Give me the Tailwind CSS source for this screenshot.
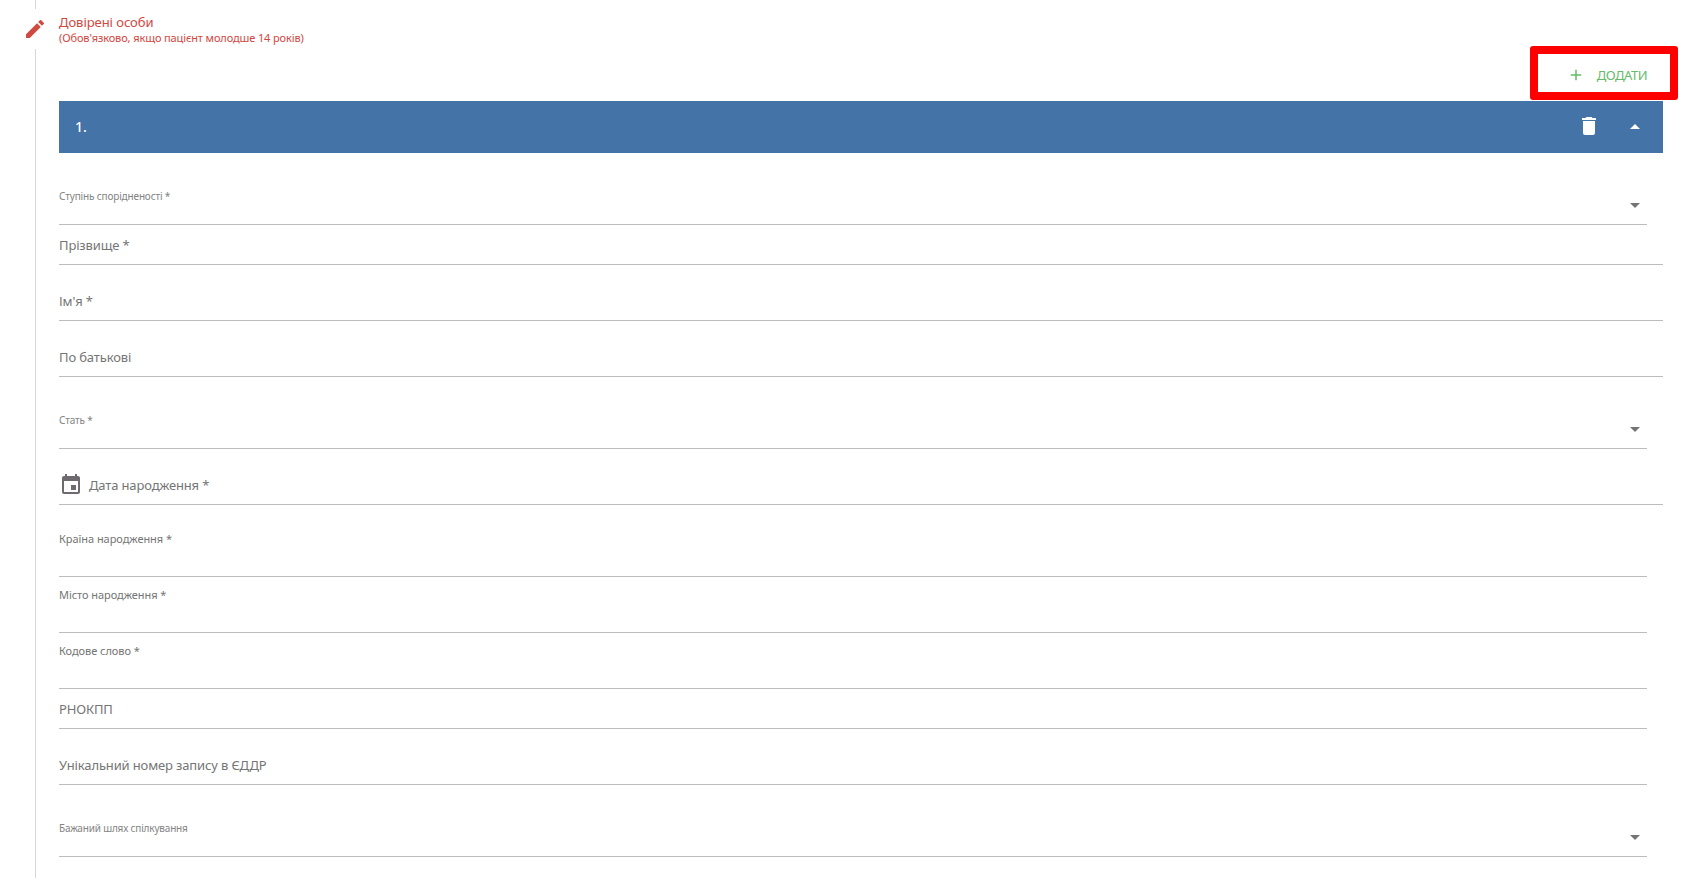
<!DOCTYPE html>
<html lang="uk">
<head>
<meta charset="utf-8">
<title>Довірені особи</title>
<script src="https://cdn.jsdelivr.net/npm/@tailwindcss/browser@4"></script>
</head>
<body class="bg-white font-['Noto_Sans',sans-serif] overflow-hidden">
<div class="flex h-[878px] w-[1683px]">
  <!-- rail -->
  <div class="w-[59px] flex flex-col shrink-0">
    <div class="ml-[35px] w-[1px] h-[9px] bg-[#d6d6d6]"></div>
    <div class="h-[40px] pl-[23px] flex items-center">
      <svg class="w-[24px] h-[24px] text-[#cf4a40]" viewBox="0 0 24 24" fill="currentColor"><path d="M3 17.25V21h3.75L17.81 9.94l-3.75-3.75L3 17.25zM20.71 7.04a1 1 0 0 0 0-1.41l-2.34-2.34a1 1 0 0 0-1.41 0l-1.83 1.83 3.75 3.75 1.83-1.83z"/></svg>
    </div>
    <div class="ml-[35px] w-[1px] flex-1 bg-[#d6d6d6]"></div>
  </div>

  <div class="w-[1604px] flex flex-col">
    <div class="h-[46px] pt-[14px] text-[#d2473f]">
      <div class="text-[13px] leading-[16px] tracking-[-0.05px]">Довірені особи</div>
      <div class="text-[11px] leading-[14px] mt-[1px] tracking-[-0.12px]">(Обов'язково, якщо пацієнт молодше 14 років)</div>
    </div>

    <div class="h-[55px] flex justify-end">
      <div class="relative w-[125px] h-[37px] mt-[8px] flex items-center justify-end pt-[5px] pr-[16px] gap-[12px] text-[#66bb6a]">
        <svg class="w-[18px] h-[18px]" viewBox="0 0 24 24" fill="currentColor"><path d="M19 13h-6v6h-2v-6H5v-2h6V5h2v6h6v2z"/></svg>
        <span class="text-[13px] leading-none uppercase tracking-[-0.5px] mt-[1px]">Додати</span>
        <div class="absolute left-[-8px] right-[-15px] top-[-8px] bottom-[-9px] border-[8px] border-[#ff0000] rounded-[3px]"></div>
      </div>
    </div>

    <div class="h-[52px] bg-[#4373a7] flex items-center pl-[16px] text-white">
      <span class="text-[14px] font-medium flex-1 mb-[1px]">1.</span>
      <svg class="w-[24px] h-[24px] mr-[22px] mb-[2px]" viewBox="0 0 24 24" fill="currentColor"><path d="M6 19c0 1.1.9 2 2 2h8c1.1 0 2-.9 2-2V7H6v12zM19 4h-3.5l-1-1h-5l-1 1H5v2h14V4z"/></svg>
      <svg class="w-[24px] h-[24px] mr-[16px]" viewBox="0 0 24 24" fill="currentColor"><path d="M7 14l5-5 5 5z"/></svg>
    </div>

    <!-- Ступінь спорідненості -->
    <div class="h-[72px] mr-[16px] border-b border-[#bdbdbd] flex justify-between items-end text-[#848484]">
      <span class="text-[10px] leading-[13px] mb-[21px] tracking-[-0.15px]">Ступінь спорідненості *</span>
      <svg class="w-[24px] h-[24px] mb-[7px] text-[#757575]" viewBox="0 0 24 24" fill="currentColor"><path d="M7 10l5 5 5-5z"/></svg>
    </div>
    <div class="h-[40px] border-b border-[#bdbdbd] flex items-end pb-[10px] text-[13px] leading-[18px] tracking-[-0.14px] text-[#757575]">Прізвище *</div>
    <div class="h-[56px] border-b border-[#bdbdbd] flex items-end pb-[10px] text-[13px] leading-[18px] tracking-[-0.14px] text-[#757575]">Ім'я *</div>
    <div class="h-[56px] border-b border-[#bdbdbd] flex items-end pb-[10px] text-[13px] leading-[18px] tracking-[-0.14px] text-[#757575]">По батькові</div>

    <!-- Стать -->
    <div class="h-[72px] mr-[16px] border-b border-[#bdbdbd] flex justify-between items-end text-[#848484]">
      <span class="text-[10px] leading-[13px] mb-[21px] tracking-[-0.15px]">Стать *</span>
      <svg class="w-[24px] h-[24px] mb-[7px] text-[#757575]" viewBox="0 0 24 24" fill="currentColor"><path d="M7 10l5 5 5-5z"/></svg>
    </div>

    <div class="h-[56px] border-b border-[#bdbdbd] flex items-end pb-[10px] text-[13px] leading-[18px] tracking-[-0.14px] text-[#757575]">
      <svg class="w-[24px] h-[24px] mr-[6px] mb-[-3px] text-[#6f6a70]" viewBox="0 0 24 24" fill="currentColor"><path d="M17 12h-5v5h5v-5zM16 1v2H8V1H6v2H5c-1.11 0-2 .9-2 2v14c0 1.1.89 2 2 2h14c1.1 0 2-.9 2-2V5c0-1.1-.9-2-2-2h-1V1h-2zm3 18H5V8h14v11z"/></svg>
      <span>Дата народження *</span>
    </div>

    <div class="h-[72px] mr-[16px] border-b border-[#bdbdbd] text-[#757575] text-[11px] leading-[14px] tracking-[-0.05px] pt-[27px]">Країна народження *</div>
    <div class="h-[56px] mr-[16px] border-b border-[#bdbdbd] text-[#757575] text-[11px] leading-[14px] tracking-[-0.05px] pt-[11px]">Місто народження *</div>
    <div class="h-[56px] mr-[16px] border-b border-[#bdbdbd] text-[#757575] text-[11px] leading-[14px] tracking-[-0.05px] pt-[11px]">Кодове слово *</div>
    <div class="h-[40px] mr-[16px] border-b border-[#bdbdbd] flex items-end pb-[10px] text-[13px] leading-[18px] tracking-[-0.14px] text-[#757575]">РНОКПП</div>
    <div class="h-[56px] mr-[16px] border-b border-[#bdbdbd] flex items-end pb-[10px] text-[13px] leading-[18px] tracking-[-0.14px] text-[#757575]">Унікальний номер запису в ЄДДР</div>

    <!-- Бажаний шлях -->
    <div class="h-[72px] mr-[16px] border-b border-[#bdbdbd] flex justify-between items-end text-[#848484]">
      <span class="text-[10px] leading-[13px] mb-[21px] tracking-[-0.18px]">Бажаний шлях спілкування</span>
      <svg class="w-[24px] h-[24px] mb-[7px] text-[#757575]" viewBox="0 0 24 24" fill="currentColor"><path d="M7 10l5 5 5-5z"/></svg>
    </div>
  </div>
</div>
</body>
</html>
